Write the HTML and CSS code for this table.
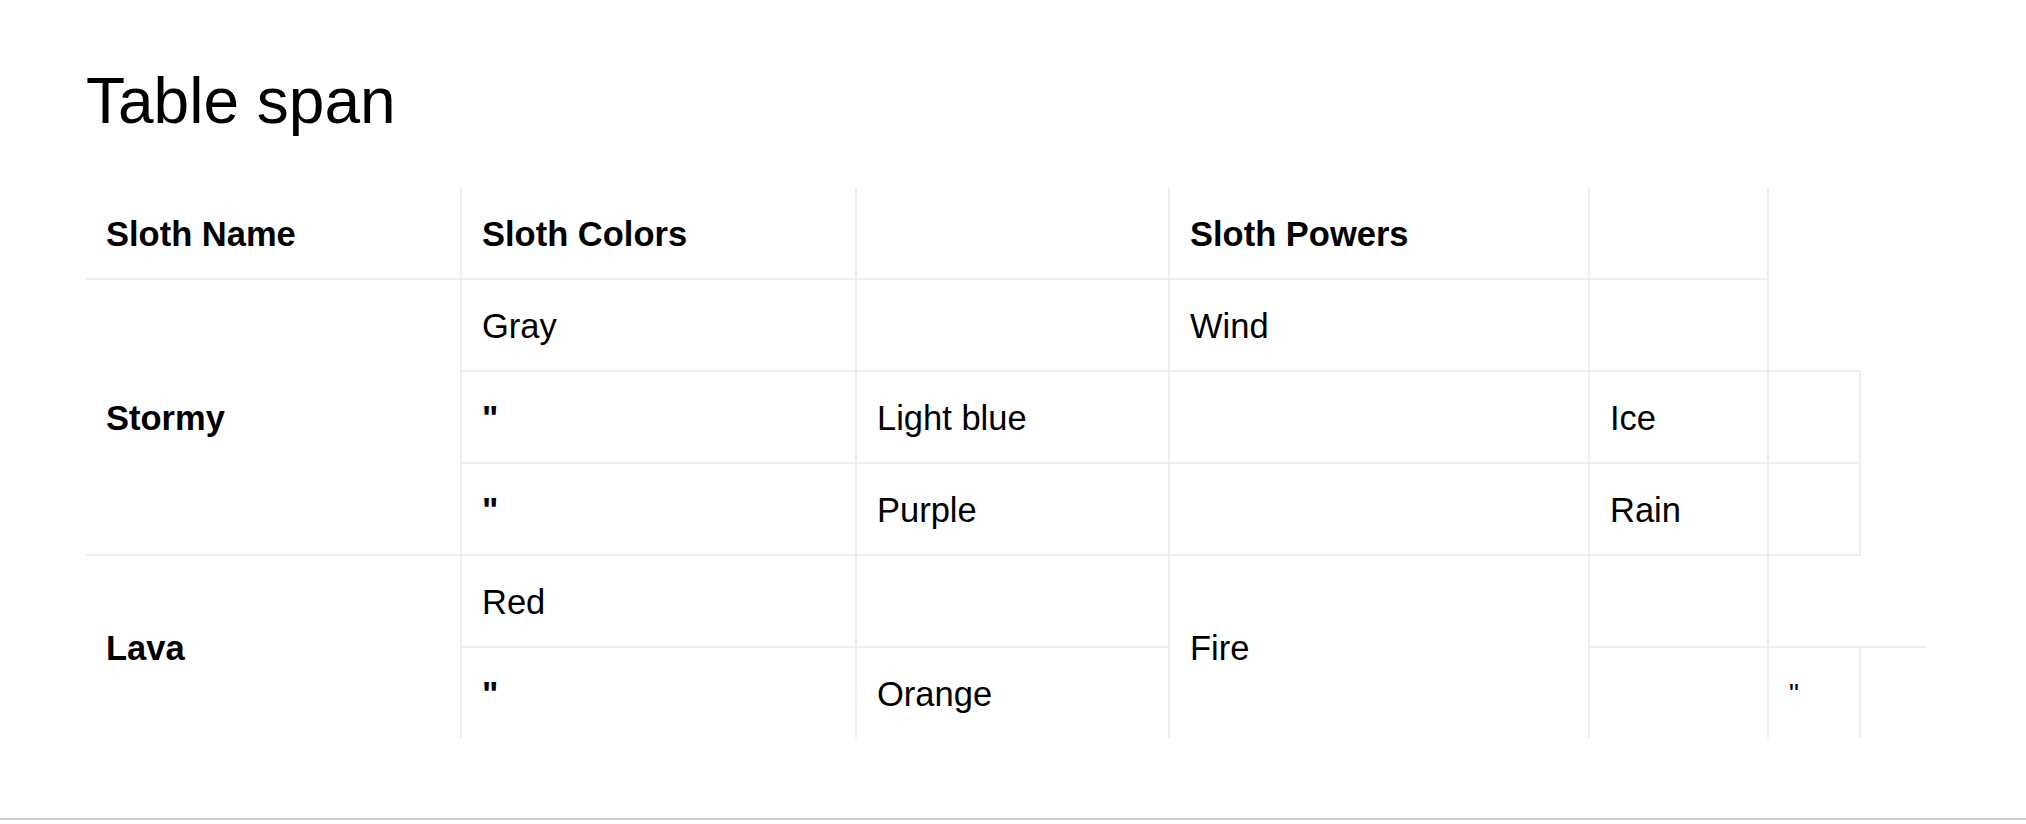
FILE: index.html
```html
<!DOCTYPE html>
<html lang="en">
<head>
<meta charset="utf-8">
<title>Table span</title>
<link rel="stylesheet" href="styles.css">
</head>
<body>
<div class="page">
  <h1 class="title">Table span</h1>
  <table class="sloths">
    <colgroup>
      <col class="c1"><col class="c2"><col class="c3"><col class="c4"><col class="c5"><col class="c6"><col class="c7">
    </colgroup>
    <thead>
      <tr><th>Sloth Name</th><th>Sloth Colors</th><td></td><th>Sloth Powers</th><td></td></tr>
    </thead>
    <tbody>
      <tr><th rowspan="3" class="row-head">Stormy</th><td>Gray</td><td></td><td>Wind</td><td></td></tr>
      <tr><td class="ditto">"</td><td>Light blue</td><td></td><td>Ice</td><td></td></tr>
      <tr><td class="ditto">"</td><td>Purple</td><td></td><td>Rain</td><td></td></tr>
      <tr><th rowspan="2" class="row-head">Lava</th><td>Red</td><td></td><td rowspan="2">Fire</td><td></td></tr>
      <tr><td class="ditto">"</td><td>Orange</td><td></td><td class="ditto-sm">"</td><td></td></tr>
    </tbody>
  </table>
</div>
</body>
</html>
```

FILE: styles.css
```css
html, body {
  margin: 0;
  padding: 0;
  background: #fff;
}

body {
  font-family: "Liberation Sans", Arial, Helvetica, sans-serif;
  color: #000;
}

.page {
  box-sizing: border-box;
  height: 820px;
  padding: 65px 0 0 86px;
  border-bottom: 2px solid #cccccc;
}

.title {
  margin: 0 0 51px 0;
  font-size: 64px;
  line-height: 72px;
  font-weight: normal;
}

.sloths {
  border-collapse: collapse;
  border-style: hidden;
  table-layout: fixed;
  width: 1841px;
  font-size: 34.5px;
  line-height: 40px;
}

.c1 { width: 375px; }
.c2 { width: 395px; }
.c3 { width: 313px; }
.c4 { width: 420px; }
.c5 { width: 179px; }
.c6 { width: 92px; }
.c7 { width: 67px; }

.sloths th,
.sloths td {
  border: 2px solid #eeeeee;
  padding: 26px 18px 24px 20px;
  text-align: left;
  vertical-align: middle;
  white-space: nowrap;
}

.sloths th {
  font-weight: bold;
}

.sloths .ditto {
  font-weight: bold;
}

.sloths .ditto-sm {
  font-weight: normal;
  font-size: 28px;
}
```
